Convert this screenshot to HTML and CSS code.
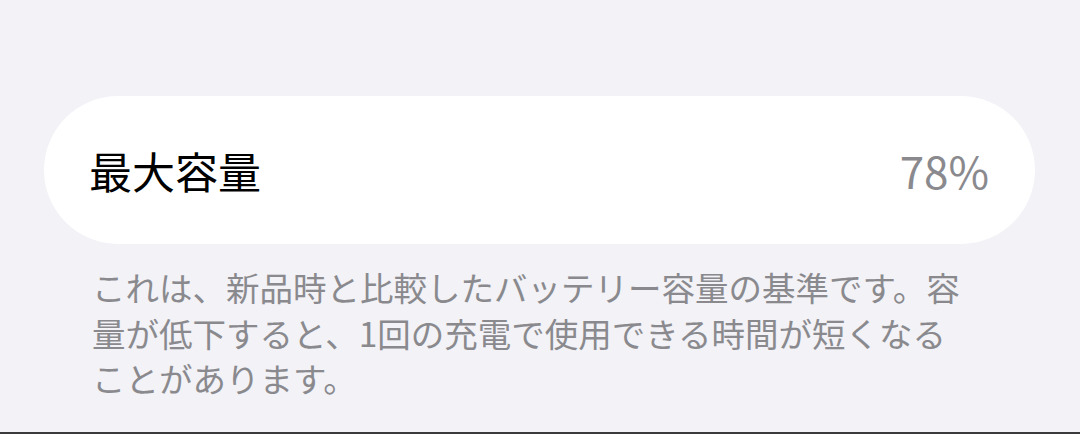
FILE: index.html
```html
<!DOCTYPE html>
<html lang="ja">

<head>
    <meta charset="UTF-8">
    <meta name="viewport" content="width=device-width, initial-scale=1.0">
    <title>バッテリーの状態</title>
    <link rel="stylesheet" href="styles.css">
</head>

<body>
    <main class="section">
        <div class="card">
            <span class="card-label">最大容量</span>
            <span class="card-value">78%</span>
        </div>
        <p class="footnote">これは、新品時と比較したバッテリー容量の基準です。容量が低下すると、1回の充電で使用できる時間が短くなることがあります。</p>
    </main>
    <div class="bottom-edge"></div>
</body>

</html>
```

FILE: styles.css
```css
* {
    margin: 0;
    padding: 0;
    box-sizing: border-box;
}

body,
html {
    height: 100%;
    overflow: hidden;
}

body {
    display: flex;
    flex-direction: column;
    background: #f2f2f7;
    font-family: "Noto Sans CJK JP", "Noto Sans", sans-serif;
}

.section {
    flex: 1;
    padding: 96px 45px 0 44px;
}

.card {
    display: flex;
    align-items: center;
    justify-content: space-between;
    height: 148px;
    padding: 0 46px 0 45px;
    background: #ffffff;
    border-radius: 74px;
}

.card-label {
    font-size: 43px;
    color: #000000;
}

.card-value {
    font-size: 44px;
    color: #8a8a8e;
}

.footnote {
    width: 926px;
    margin-top: 20px;
    padding-left: 48px;
    font-size: 33.5px;
    line-height: 45.5px;
    color: #8a8a8e;
}

.bottom-edge {
    height: 2px;
    background: #3a3a3c;
}
```
